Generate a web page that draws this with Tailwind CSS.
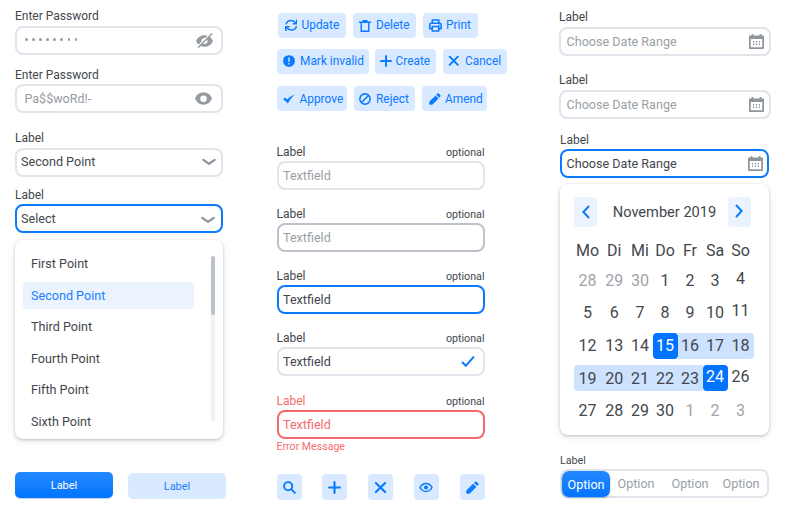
<!DOCTYPE html>
<html lang="en">
<head>
<meta charset="utf-8">
<title>Form components</title>
<script src="https://cdn.jsdelivr.net/npm/@tailwindcss/browser@4"></script>
</head>
<body class="bg-white font-[Roboto,sans-serif] text-[#43474c]">
<svg class="hidden">
  <symbol id="refresh" viewBox="0 0 24 24"><g fill="none" stroke="currentColor" stroke-width="3"><path d="M2 10.500C3 5.500 7 2.800 12 2.800c4 0 7 2 9 5M22 13.500c-1 5-5 7.700-10 7.700-4 0-7-2-9-5"/><path d="M22.500 1v8h-7.500M1.500 23v-8H9"/></g></symbol>
  <symbol id="trash" viewBox="0 0 24 24"><path d="M0 4.500h24M8.500 4V1.500h7V4M4.500 5v17.500h15V5" fill="none" stroke="currentColor" stroke-width="2.900"/></symbol>
  <symbol id="printer" viewBox="0 0 24 24"><g fill="none" stroke="currentColor" stroke-width="2.900" stroke-linejoin="round"><path d="M6 8V2h12v6M6 18H1.500v-7.500Q1.500 8 4 8h16q2.500 0 2.500 2.500V18H18"/><path d="M6 14h12v8H6z"/></g><circle cx="18.500" cy="11.500" r="1.300" fill="currentColor"/></symbol>
  <symbol id="alert" viewBox="0 0 24 24"><path fill="currentColor" d="m12 0 3 1.300 3.300.2 2 2.600 2.700 2 .2 3.200L24 12l-1 3-.2 3-2.700 2-2 2.600-3.200.2L12 24l-3-1.200-3.200-.2-2-2.600-2.600-2L1 15l-1-3 1-3 .2-3.300 2.600-2 2-2.400L9 1.300z"/><path stroke="#dbeaff" stroke-width="2.800" d="M12 5v8.500M12 16.200V19"/></symbol>
  <symbol id="plus" viewBox="0 0 24 24"><path d="M12 2v20M2 12h20" stroke="currentColor" stroke-width="3.900" stroke-linecap="round"/></symbol>
  <symbol id="cross" viewBox="0 0 24 24"><path d="m3.500 3.500 17 17M20.500 3.500l-17 17" stroke="currentColor" stroke-width="4" stroke-linecap="round"/></symbol>
  <symbol id="check-bold" viewBox="0 0 24 24"><path fill="currentColor" d="m.3 12.500 3.200-3.300 5 4Q15 6.500 23.500 3.200 15 11 9.700 20.800 5.500 16 .3 12.500z"/></symbol>
  <symbol id="check" viewBox="0 0 24 24"><path d="m2 14 6 6L22 4" fill="none" stroke="currentColor" stroke-width="3.700" stroke-linecap="round" stroke-linejoin="round"/></symbol>
  <symbol id="ban" viewBox="0 0 24 24"><g fill="none" stroke="currentColor" stroke-width="3.100"><circle cx="12" cy="12" r="10.300"/><path d="M5 19 19 5"/></g></symbol>
  <symbol id="pencil" viewBox="0 0 24 24"><path fill="currentColor" d="M.5 18.500Q.500 17.500 1.500 16.500L13 5l6 6L7.500 22.500q-1 1-2 1H2.500q-2 0-2-2zM14.700 3.500 17 1.200q1.200-1.200 2.400 0l3.400 3.400q1.200 1.200 0 2.400L20.500 9.300z"/></symbol>
  <symbol id="search" viewBox="0 0 24 24"><g fill="none" stroke="currentColor" stroke-width="3.500" stroke-linecap="round"><circle cx="9.500" cy="9.500" r="7.500"/><path d="m15.500 15.500 6.500 6.500"/></g></symbol>
  <symbol id="eye-line" viewBox="0 0 28 20"><path d="M2 10Q6.500 2 14 2t12 8q-4.500 8-12 8T2 10z" fill="none" stroke="currentColor" stroke-width="3"/><circle cx="14" cy="10" r="4.200" fill="currentColor"/></symbol>
  <symbol id="eye" viewBox="0 0 34 26"><path fill="currentColor" fill-rule="evenodd" d="M0 13Q5 .500 17 .500T34 13q-5 12.500-17 12.500T0 13zm17-6a6.500 6.500 0 1 0 0 13 6.500 6.500 0 0 0 0-13z"/></symbol>
  <symbol id="eye-off" viewBox="0 0 34 30"><path fill="currentColor" fill-rule="evenodd" d="M0 16Q5 4.500 17 4.500t17 11.500q-5 11.500-17 11.500T0 16zm17-6a6 6 0 1 0 0 12 6 6 0 0 0 0-12z"/><path d="M2.500 28 30 .5" stroke="#fff" stroke-width="3"/><path d="M4 29.500 32.500 1" stroke="currentColor" stroke-width="2.800"/></symbol>
  <symbol id="calendar" viewBox="0 0 30 30"><path fill="currentColor" fill-rule="evenodd" d="M1.500 3H5V1.500Q5 0 6.500 0h1Q9 0 9 1.500V3h12V1.500Q21 0 22.500 0h1Q25 0 25 1.500V3h3.500Q30 3 30 4.500v24Q30 30 28.500 30h-27Q0 30 0 28.500v-24Q0 3 1.500 3zM3.500 10v16.500h23V10z"/><path d="M8 15.500h14.500M8 20.500h14.500" stroke="currentColor" stroke-width="2.700" stroke-dasharray="2.500 3.300"/></symbol>
  <symbol id="chevron" viewBox="0 0 14 8"><path d="M1.300 1.800 7 6l5.700-4.200" fill="none" stroke="currentColor" stroke-width="2.200" stroke-linecap="round"/></symbol>
  <symbol id="left" viewBox="0 0 8 14"><path d="M7 1 1.300 7 7 13" fill="none" stroke="currentColor" stroke-width="2"/></symbol>
</svg>

<main class="w-[788px] h-[509px] overflow-hidden flex items-start">

  <section class="w-[208px] ml-[15px] pt-[8px] shrink-0 text-[12px]">
    <div class="h-[16px] leading-[16px]">Enter Password</div>
    <div class="h-[29px] mt-[1.5px] border-2 border-[#e0e4eb] rounded-[8px] flex items-center justify-between pl-[8px] pr-[8px] text-[#969ba2]">
      <div class="flex gap-[4.6px] -mt-[1px]"><i class="size-[2.5px] rounded-full bg-current"></i><i class="size-[2.5px] rounded-full bg-current"></i><i class="size-[2.5px] rounded-full bg-current"></i><i class="size-[2.5px] rounded-full bg-current"></i><i class="size-[2.5px] rounded-full bg-current"></i><i class="size-[2.5px] rounded-full bg-current"></i><i class="size-[2.5px] rounded-full bg-current"></i><i class="size-[2.5px] rounded-full bg-current"></i></div>
      <svg class="w-[17px] h-[15px]"><use href="#eye-off"/></svg>
    </div>
    <div class="h-[16px] leading-[16px] mt-[12px]">Enter Password</div>
    <div class="h-[29px] mt-[1.5px] border-2 border-[#e0e4eb] rounded-[8px] flex items-center justify-between pl-[7.5px] pr-[9px] text-[#969ba2] text-[12.5px]">
      <span class="pt-[1px]">Pa$$woRd!-</span>
      <svg class="w-[17px] h-[13px]"><use href="#eye"/></svg>
    </div>
    <div class="h-[16px] leading-[16px] mt-[17px]">Label</div>
    <div class="h-[29px] mt-[1.5px] border-2 border-[#e0e4eb] rounded-[8px] flex items-center justify-between pl-[4px] pr-[5px] text-[12.6px]">
      <span>Second Point</span>
      <svg class="w-[14px] h-[8px] text-[#8f959c]"><use href="#chevron"/></svg>
    </div>
    <div class="h-[16px] leading-[16px] mt-[10.5px]">Label</div>
    <div class="h-[29px] mt-[1px] border-2 border-[#0a7aff] rounded-[8px] flex items-center justify-between pl-[4px] pr-[6px] text-[12.6px]">
      <span class="pt-[1px]">Select</span>
      <svg class="w-[14px] h-[8px] text-[#8f959c] mt-[2px]"><use href="#chevron"/></svg>
    </div>
    <div class="h-[199px] mt-[7px] rounded-[8px] bg-white shadow-[0_1px_3px_rgba(0,0,0,0.22),0_2px_9px_rgba(0,0,0,0.08)] flex justify-between pt-[10px] pl-[8px] pr-[8px] text-[12.6px]">
      <ul class="w-[171px]">
        <li class="h-[27.5px] mb-[4px] pl-[8px] leading-[28px]">First Point</li>
        <li class="h-[27.5px] mb-[4px] pl-[8px] leading-[28px] rounded-[4px] bg-[#ebf3ff] text-[#1a80ff]">Second Point</li>
        <li class="h-[27.5px] mb-[4px] pl-[8px] leading-[28px]">Third Point</li>
        <li class="h-[27.5px] mb-[4px] pl-[8px] leading-[28px]">Fourth Point</li>
        <li class="h-[27.5px] mb-[4px] pl-[8px] leading-[28px]">Fifth Point</li>
        <li class="h-[27.5px] pl-[8px] leading-[28px]">Sixth Point</li>
      </ul>
      <div class="w-[4px] h-[166px] mt-[6px] rounded-full bg-[#edf2f5]"><div class="h-[59px] rounded-full bg-[#b9c1ca]"></div></div>
    </div>
    <div class="w-[211px] mt-[33px] flex justify-between text-[11px] leading-[28px] text-center">
      <button class="w-[98px] h-[26px] rounded-[5px] bg-linear-to-b from-[#2489ff] to-[#0074ff] text-white shadow-[0_1px_1px_rgba(0,80,180,0.25)]">Label</button>
      <button class="w-[98px] h-[26px] mt-[1px] rounded-[5px] bg-[#d9e9ff] text-[#1a80ff]">Label</button>
    </div>
  </section>

  <section class="w-[208px] ml-[53.5px] pt-[13px] shrink-0 text-[12px]">
    <div class="w-[232px] text-[#0a7aff] text-[11.9px] leading-[25px]">
      <div class="flex gap-[7px] pl-[1.5px]">
        <button class="w-[68px] h-[25px] rounded-[4px] bg-[#d9e9ff] flex items-center pl-[6.5px] gap-[4.5px]"><svg class="size-[12.5px] shrink-0"><use href="#refresh"/></svg>Update</button>
        <button class="w-[63px] h-[25px] rounded-[4px] bg-[#d9e9ff] flex items-center pl-[6px] gap-[5px]"><svg class="size-[12px] shrink-0"><use href="#trash"/></svg>Delete</button>
        <button class="w-[54.5px] h-[25px] rounded-[4px] bg-[#d9e9ff] flex items-center pl-[6px] gap-[4px]"><svg class="size-[13px] shrink-0"><use href="#printer"/></svg>Print</button>
      </div>
      <div class="flex gap-[6.5px] mt-[10.5px]">
        <button class="w-[92px] h-[25px] rounded-[4px] bg-[#d9e9ff] flex items-center pl-[6px] gap-[5.5px]"><svg class="size-[12px] shrink-0"><use href="#alert"/></svg><span class="whitespace-nowrap">Mark invalid</span></button>
        <button class="w-[61px] h-[25px] rounded-[4px] bg-[#d9e9ff] flex items-center pl-[5px] gap-[3.5px]"><svg class="size-[12px] shrink-0"><use href="#plus"/></svg>Create</button>
        <button class="w-[64px] h-[25px] rounded-[4px] bg-[#d9e9ff] flex items-center pl-[5px] gap-[6px]"><svg class="size-[11.5px] shrink-0"><use href="#cross"/></svg>Cancel</button>
      </div>
      <div class="flex gap-[7px] mt-[12.5px]">
        <button class="w-[70.5px] h-[25px] rounded-[4px] bg-[#d9e9ff] flex items-center pt-[1px] pl-[6px] gap-[5px]"><svg class="size-[12px] shrink-0"><use href="#check-bold"/></svg>Approve</button>
        <button class="w-[61px] h-[25px] rounded-[4px] bg-[#d9e9ff] flex items-center pt-[1px] pl-[5px] gap-[5px]"><svg class="size-[12px] shrink-0"><use href="#ban"/></svg>Reject</button>
        <button class="w-[64.5px] h-[25px] rounded-[4px] bg-[#d9e9ff] flex items-center pt-[1px] pl-[6.5px] gap-[4.5px]"><svg class="size-[12px] shrink-0"><use href="#pencil"/></svg>Amend</button>
      </div>
    </div>

    <div class="flex justify-between h-[17px] leading-[16px] mt-[33px]"><span>Label</span><span class="text-[10.7px] leading-[17px]">optional</span></div>
    <div class="h-[29px] border-2 border-[#e0e4eb] rounded-[8px] flex items-center px-[4.5px] pt-[1px] text-[12.6px] text-[#9a9fa6]">Textfield</div>
    <div class="flex justify-between h-[17px] leading-[16px] mt-[16px]"><span>Label</span><span class="text-[10.7px] leading-[17px]">optional</span></div>
    <div class="h-[29px] border-2 border-[#bcc3cd] rounded-[8px] flex items-center px-[4.5px] pt-[1px] text-[12.6px] text-[#9a9fa6]">Textfield</div>
    <div class="flex justify-between h-[17px] leading-[16px] mt-[16px]"><span>Label</span><span class="text-[10.7px] leading-[17px]">optional</span></div>
    <div class="h-[29px] border-2 border-[#0a7aff] rounded-[8px] flex items-center px-[4.5px] pt-[1px] text-[12.6px]">Textfield</div>
    <div class="flex justify-between h-[17px] leading-[16px] mt-[16px]"><span>Label</span><span class="text-[10.7px] leading-[17px]">optional</span></div>
    <div class="h-[29px] border-2 border-[#e0e4eb] rounded-[8px] flex items-center justify-between pl-[4.5px] pr-[8px] text-[12.6px]"><span class="pt-[1px]">Textfield</span><svg class="w-[14px] h-[13px] text-[#0a7aff]"><use href="#check"/></svg></div>
    <div class="flex justify-between h-[17px] leading-[16px] mt-[17px]"><span class="text-[#f76a6d]">Label</span><span class="text-[10.7px] leading-[17px]">optional</span></div>
    <div class="h-[29px] border-2 border-[#f46a6c] rounded-[8px] flex items-center px-[4.5px] pt-[1px] text-[12.6px] text-[#f76a6d]">Textfield</div>
    <div class="h-[16px] leading-[16px] text-[10.6px] text-[#f76a6d]">Error Message</div>
    <div class="flex justify-between mt-[19px] text-[#0a7aff]">
      <button class="w-[25px] h-[26px] rounded-[4px] bg-[#d9e9ff] flex items-center justify-center"><svg class="size-[13px]"><use href="#search"/></svg></button>
      <button class="w-[25px] h-[26px] rounded-[4px] bg-[#d9e9ff] flex items-center justify-center"><svg class="size-[13px]"><use href="#plus"/></svg></button>
      <button class="w-[25px] h-[26px] rounded-[4px] bg-[#d9e9ff] flex items-center justify-center"><svg class="size-[13px]"><use href="#cross"/></svg></button>
      <button class="w-[25px] h-[26px] rounded-[4px] bg-[#d9e9ff] flex items-center justify-center"><svg class="w-[14px] h-[11px]"><use href="#eye-line"/></svg></button>
      <button class="w-[25px] h-[26px] rounded-[4px] bg-[#d9e9ff] flex items-center justify-center"><svg class="size-[13px] mt-[1px]"><use href="#pencil"/></svg></button>
    </div>
  </section>

  <section class="w-[212px] ml-[74.5px] pt-[9px] shrink-0 text-[12px]">
    <div class="h-[16px] leading-[16px]">Label</div>
    <div class="h-[29px] mt-[2px] border-2 border-[#e0e4eb] rounded-[8px] flex items-center justify-between pl-[5.5px] pr-[5px] text-[12.6px] text-[#9a9fa6]"><span class="pt-[1px]">Choose Date Range</span><svg class="size-[15px] text-[#8f959c]"><use href="#calendar"/></svg></div>
    <div class="h-[16px] leading-[16px] mt-[16px]">Label</div>
    <div class="h-[29px] mt-[2px] border-2 border-[#e0e4eb] rounded-[8px] flex items-center justify-between pl-[5.5px] pr-[5px] text-[12.6px] text-[#9a9fa6]"><span class="pt-[1px]">Choose Date Range</span><svg class="size-[15px] text-[#8f959c]"><use href="#calendar"/></svg></div>
    <div class="w-[209px] ml-[1px]">
      <div class="h-[16px] leading-[16px] mt-[13px]">Label</div>
      <div class="h-[29px] mt-[1px] border-2 border-[#0a7aff] rounded-[8px] flex items-center justify-between pl-[4.5px] pr-[4.5px] text-[12.6px]"><span class="pt-[1px]">Choose Date Range</span><svg class="size-[15px] text-[#8f959c]"><use href="#calendar"/></svg></div>
      <div class="h-[251px] mt-[6px] rounded-[8px] bg-white shadow-[0_1px_3px_rgba(0,0,0,0.22),0_2px_9px_rgba(0,0,0,0.08)] pt-[12.5px] px-[14px]">
        <div class="w-[177px] flex justify-between items-center text-[14.6px]">
          <button class="w-[23px] h-[30px] rounded-[4px] bg-[#ebf3ff] text-[#0a7aff] flex items-center justify-center"><svg class="w-[8px] h-[14px]"><use href="#left"/></svg></button>
          <span class="pl-[4px] pt-[2px]">November 2019</span>
          <button class="w-[23px] h-[30px] rounded-[4px] bg-[#ebf3ff] text-[#0a7aff] flex items-center justify-center"><svg class="w-[8px] h-[14px] rotate-180 mb-[2px]"><use href="#left"/></svg></button>
        </div>
        <div class="w-[180px] grid grid-cols-[27px_26.5px_25px_25px_25px_25px_26px] text-center text-[16px] leading-[26px] mt-[11px]">
          <span>Mo</span><span>Di</span><span>Mi</span><span>Do</span><span>Fr</span><span>Sa</span><span>So</span>
        </div>
        <div class="w-[180px] grid grid-cols-[27px_26.5px_25px_25px_25px_25px_26px] auto-rows-[26px] gap-y-[6.5px] text-center text-[16px] leading-[26px] mt-[4px]">
          <span class="text-[#a0a4aa]">28</span><span class="text-[#a0a4aa]">29</span><span class="text-[#a0a4aa]">30</span><span>1</span><span>2</span><span>3</span><span class="leading-[22px]">4</span>
          <span>5</span><span>6</span><span>7</span><span>8</span><span>9</span><span>10</span><span class="leading-[22px]">11</span>
          <span>12</span><span>13</span><span>14</span><span class="rounded-[4px] bg-[#0074ff] text-white">15</span><span class="bg-[#cce2ff]">16</span><span class="bg-[#cce2ff]">17</span><span class="bg-[#cce2ff] rounded-r-[4px]">18</span>
          <span class="bg-[#cce2ff] rounded-l-[4px] leading-[27px]">19</span><span class="bg-[#cce2ff] leading-[27px]">20</span><span class="bg-[#cce2ff] leading-[27px]">21</span><span class="bg-[#cce2ff] leading-[27px]">22</span><span class="bg-[#cce2ff] leading-[27px]">23</span><span class="rounded-[4px] bg-[#0074ff] text-white leading-[24px]">24</span><span class="leading-[24px]">26</span>
          <span>27</span><span>28</span><span>29</span><span>30</span><span class="text-[#a0a4aa]">1</span><span class="text-[#a0a4aa]">2</span><span class="text-[#a0a4aa]">3</span>
        </div>
      </div>
      <div class="h-[16px] leading-[18px] mt-[17px] text-[10.7px]">Label</div>
      <div class="h-[29px] mt-[1px] border-2 border-[#e0e4eb] rounded-[8px] flex items-center text-[12.6px] leading-[27px] text-[#9a9fa6] text-center">
        <span class="w-[48px] h-[26px] leading-[27px] rounded-[7px] bg-linear-to-b from-[#2489ff] to-[#0074ff] text-white shadow-[0_1px_2px_rgba(0,60,140,0.4)]">Option</span>
        <span class="w-[52px]">Option</span>
        <span class="w-[56px]">Option</span>
        <span class="w-[46px]">Option</span>
      </div>
    </div>
  </section>
</main>
</body>
</html>
